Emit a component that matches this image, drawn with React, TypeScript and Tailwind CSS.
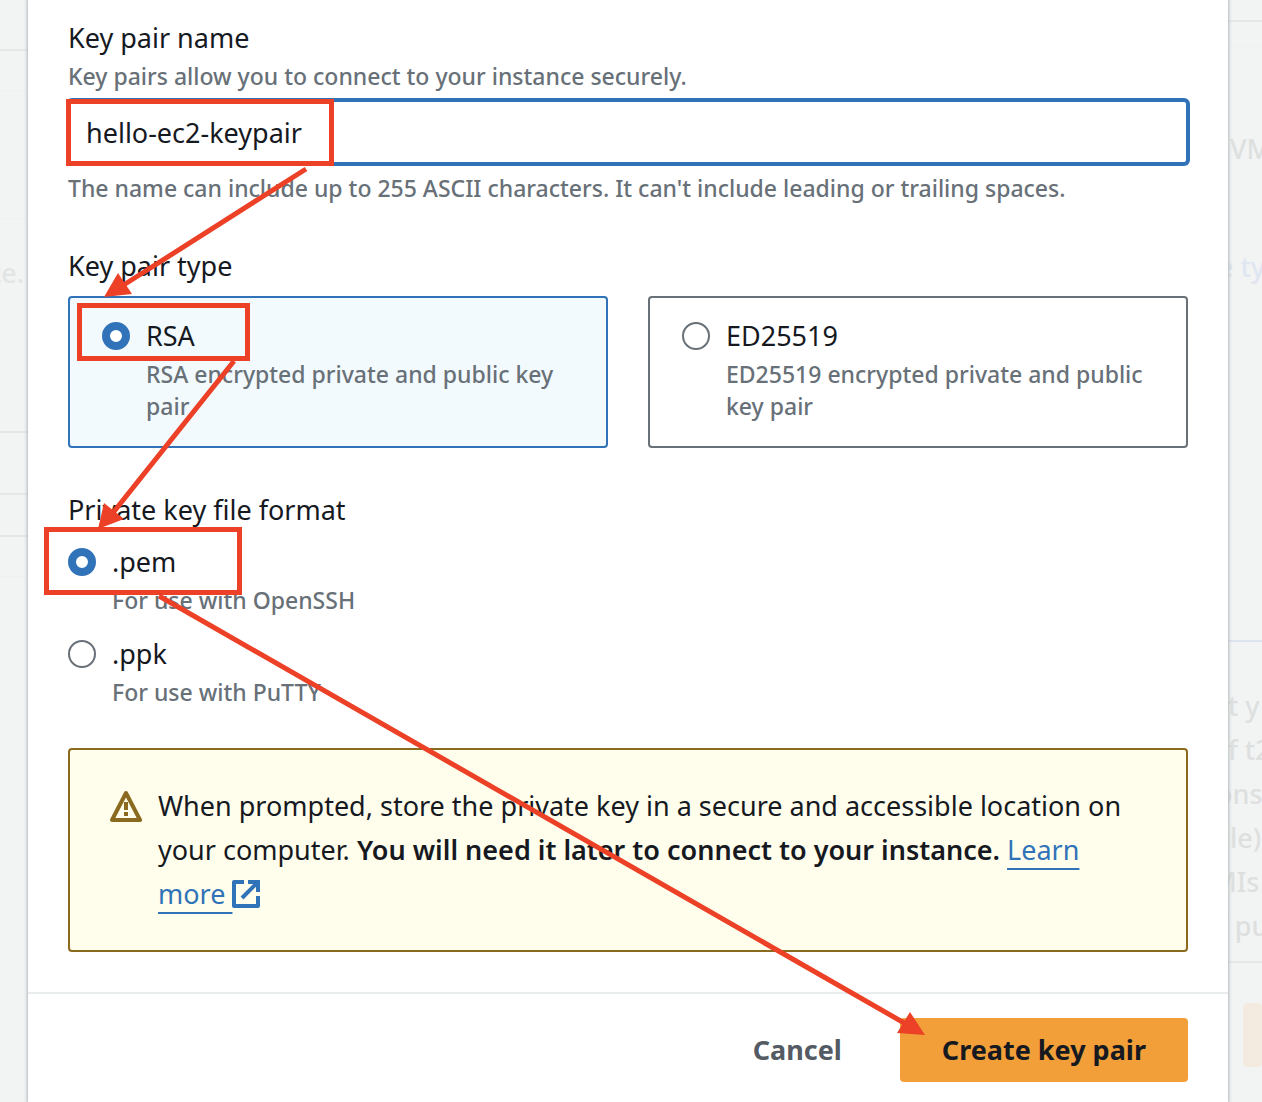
import React, { useState } from "react";

type OptionProps = {
  name: string;
  value: string;
  label: string;
  description: string;
  selected: string;
  onSelect: (value: string) => void;
};

function RadioOption({ name, value, label, description, selected, onSelect }: OptionProps) {
  const id = `${name}-${value}`;
  return (
    <div className="flex items-start gap-4">
      <input
        type="radio"
        id={id}
        name={name}
        value={value}
        checked={selected === value}
        onChange={() => onSelect(value)}
        aria-describedby={`${id}-description`}
        className="my-2 size-7 shrink-0 appearance-none rounded-full border-2 border-[#687078] bg-white checked:border-8 checked:border-[#3073b9]"
      />
      <div className="min-w-0">
        <label htmlFor={id} className="block text-[27px] leading-[44px]">
          {label}
        </label>
        <p id={`${id}-description`} className="text-[23px] leading-8 font-medium text-[#687078]">
          {description}
        </p>
      </div>
    </div>
  );
}

function TypeCard(props: OptionProps) {
  const active = props.selected === props.value;
  return (
    <div
      className={
        active
          ? "rounded border-2 border-[#3073b9] bg-[#f2fafe] px-8 pt-4 pb-6"
          : "rounded border-2 border-[#687078] bg-white px-8 pt-4 pb-6"
      }
    >
      <RadioOption {...props} />
    </div>
  );
}

function WarningIcon() {
  return (
    <svg viewBox="0 0 32 32" className="mt-1.5 size-8 shrink-0" fill="none" aria-hidden="true">
      <path d="M16 3 L30 30 H2 Z" stroke="#8a6a1f" strokeWidth="4" strokeLinejoin="round" />
      <path d="M16 12 V20 M16 22 V26" stroke="#8a6a1f" strokeWidth="4" />
    </svg>
  );
}

function ExternalIcon() {
  return (
    <svg viewBox="0 0 28 28" className="inline-block size-7 align-[-4px]" fill="none" aria-hidden="true">
      <path d="M12 2 H2 V26 H26 V16" stroke="#3073b9" strokeWidth="4" strokeLinejoin="round" />
      <path d="M16 2 H26 V12 M26 2 L10 18" stroke="#3073b9" strokeWidth="4" />
    </svg>
  );
}

function Annotations() {
  return (
    <svg
      className="pointer-events-none absolute top-0 left-0"
      width="1262"
      height="1102"
      viewBox="0 0 1262 1102"
      fill="none"
      aria-hidden="true"
    >
      <g stroke="#ec4127" strokeWidth="5">
        <rect x="68.5" y="101.5" width="263" height="62" />
        <rect x="79.5" y="305.5" width="168" height="53" />
        <rect x="46.5" y="529.5" width="193" height="63" />
        <path d="M306 169 L122 286 M234 361 L112 514 M159 596 L906 1024" />
      </g>
      <g fill="#ec4127">
        <path d="M104 297 L118 273 L132 294 Z" />
        <path d="M98 529 L104 503 L124 519 Z" />
        <path d="M925 1035 L910 1012 L897 1033 Z" />
      </g>
    </svg>
  );
}

function LeftBackdrop() {
  return (
    <aside className="w-7 shrink-0 overflow-hidden font-medium text-[#e2e5e5]" aria-hidden="true">
      <div className="h-[51px] border-b-2 border-[#e5e7e7]" />
      <div className="h-10 border-b border-[#eff1f1]" />
      <div className="h-32 border-b border-[#eff1f1]" />
      <div className="flex h-[214px] justify-end border-b-2 border-[#e5e7e7] pt-8 pr-1">te.</div>
      <div className="h-[62px] border-b-2 border-[#e5e7e7]" />
      <div className="h-[42px] border-b-2 border-[#e5e7e7]" />
      <div className="h-10 border-b border-[#eff1f1]" />
    </aside>
  );
}

function RightBackdrop() {
  return (
    <aside
      className="w-[34px] shrink-0 overflow-hidden font-medium whitespace-nowrap text-[#dde0df]"
      aria-hidden="true"
    >
      <div className="h-[22px] border-b-2 border-[#e5e7e7]" />
      <div className="h-[25px] border-b border-[#eff1f1]" />
      <div className="h-[595px] border-b-2 border-[#dde4f0] pt-20">
        <p className="ml-0.5">VM</p>
        <p className="mt-[74px] -ml-2.5 text-[#dfe6f1]">e ty</p>
      </div>
      <div className="h-[321px] border-b-2 border-[#e5e7e7] pt-[42px]">
        <p>t y</p>
        <p>f t2</p>
        <p className="-ml-3">ons</p>
        <p className="ml-0.5">le)</p>
        <p className="-ml-4">MIs</p>
        <p className="-ml-2.5">f pu</p>
      </div>
      <div className="mt-10 ml-[15px] h-16 rounded bg-[#f3ebe0]" />
    </aside>
  );
}

export default function App() {
  const [name, setName] = useState("hello-ec2-keypair");
  const [type, setType] = useState("rsa");
  const [format, setFormat] = useState("pem");

  return (
    <div className="relative flex min-h-screen overflow-hidden bg-[#f2f4f4] font-['Noto_Sans',sans-serif] text-[27px] leading-[44px] text-[#16191f]">
      <LeftBackdrop />
      <main
        role="dialog"
        aria-label="Create key pair"
        className="relative min-w-0 flex-1 bg-white shadow-[0_0_3px_1px_#b0b8ba]"
      >
        <div className="px-10 pt-4 pb-10">
          <label htmlFor="key-name" className="block">
            Key pair name
          </label>
          <p className="text-[23px] leading-8 font-medium text-[#687078]">
            Key pairs allow you to connect to your instance securely.
          </p>
          <input
            id="key-name"
            type="text"
            value={name}
            onChange={(e) => setName(e.target.value)}
            className="mt-2 block h-16 w-full rounded-sm border-2 border-[#3073b9] bg-white px-4 ring-2 ring-[#3073b9] outline-none"
          />
          <p className="mt-2 text-[23px] leading-8 font-medium text-[#687078]">
            The name can include up to 255 ASCII characters. It can't include leading or trailing spaces.
          </p>

          <fieldset className="mt-10">
            <legend>Key pair type</legend>
            <div className="mt-2 grid grid-cols-2 gap-10">
              <TypeCard
                name="type"
                value="rsa"
                label="RSA"
                description="RSA encrypted private and public key pair"
                selected={type}
                onSelect={setType}
              />
              <TypeCard
                name="type"
                value="ed25519"
                label="ED25519"
                description="ED25519 encrypted private and public key pair"
                selected={type}
                onSelect={setType}
              />
            </div>
          </fieldset>

          <fieldset className="mt-10">
            <legend>Private key file format</legend>
            <div className="mt-2 flex flex-col gap-4">
              <RadioOption
                name="format"
                value="pem"
                label=".pem"
                description="For use with OpenSSH"
                selected={format}
                onSelect={setFormat}
              />
              <RadioOption
                name="format"
                value="ppk"
                label=".ppk"
                description="For use with PuTTY"
                selected={format}
                onSelect={setFormat}
              />
            </div>
          </fieldset>

          <section className="mt-10 flex gap-4 rounded border-2 border-[#8a6a1f] bg-[#fffeec] px-10 py-[34px]">
            <WarningIcon />
            <p className="min-w-0 flex-1">
              When prompted, store the private key in a secure and accessible location on your computer.{" "}
              <strong className="font-semibold">You will need it later to connect to your instance.</strong>{" "}
              <a href="#learn-more" className="text-[#3073b9]">
                <span className="underline decoration-2 underline-offset-8">Learn</span>{" "}
                <span className="whitespace-nowrap">
                  <span className="underline decoration-2 underline-offset-8">more&nbsp;</span>
                  <ExternalIcon />
                </span>
              </a>
            </p>
          </section>
        </div>

        <footer className="flex justify-end gap-4 border-t-2 border-[#eaeded] px-10 pt-6 pb-5 font-bold">
          <button type="button" className="h-16 px-[42px] text-[#545b64]">
            Cancel
          </button>
          <button type="button" className="h-16 rounded bg-[#f29f3a] px-[42px]">
            Create key pair
          </button>
        </footer>
      </main>
      <RightBackdrop />
      <Annotations />
    </div>
  );
}
